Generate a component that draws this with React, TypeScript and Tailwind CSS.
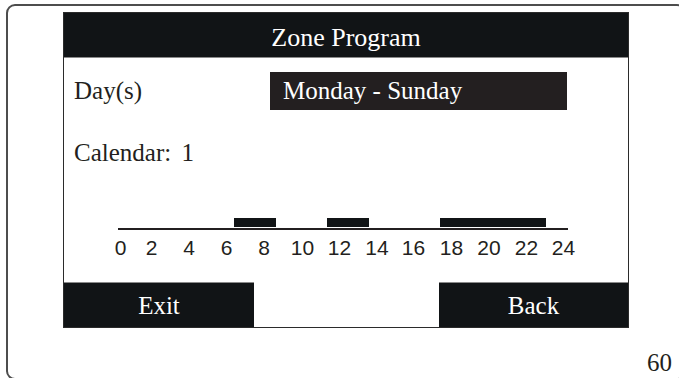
import React from 'react';

const serif = { fontFamily: '"Liberation Serif", "Times New Roman", serif' };

// hour labels and their centre x (svg coords)
const ticks: [string, number][] = [
  ['0', 56.5], ['2', 87.5], ['4', 125], ['6', 162.5], ['8', 200], ['10', 238.5], ['12', 275.5],
  ['14', 313], ['16', 349.5], ['18', 387.5], ['20', 425], ['22', 462.5], ['24', 499.5],
];

// active periods, in svg x
const periods = [
  { x: 170, w: 42 },
  { x: 263, w: 42 },
  { x: 376, w: 106 },
];

function Timeline() {
  return (
    <svg width="563" height="52" viewBox="0 0 563 52" className="block">
      {periods.map((p, i) => (
        <rect key={i} x={p.x} y={8} width={p.w} height={9} fill="#111416" />
      ))}
      <rect x={54} y={18} width={450} height={2} fill="#231f20" />
      {ticks.map(([t, x]) => (
        <text
          key={t}
          x={x}
          y={45}
          textAnchor="middle"
          fontSize="21"
          fill="#231f20"
          fontFamily='"Liberation Sans", Arial, sans-serif'
        >
          {t}
        </text>
      ))}
    </svg>
  );
}

export default function App() {
  return (
    <div className="w-[679px] h-[378px] overflow-hidden bg-white pt-[4px] pl-[6px]" style={serif}>
      <div className="w-[680px] h-[376px] border-2 border-[#4d4d4d] rounded-[9px] flex flex-col">
        {/* LCD screen */}
        <div className="w-[566px] ml-[55px] mt-[6px] border border-[#2b2b2b] flex flex-col bg-white">
          <div className="h-[45px] bg-[#111416] text-white text-[26px] leading-[45px] text-center pt-[2px] border-b border-[#8a8a8a]">
            Zone Program
          </div>

          <div className="h-[224px] flex flex-col text-[#231f20] text-[25px]">
            <div className="flex items-center mt-[14px]">
              <div className="w-[206px] pl-[10px] leading-[38px]">Day(s)</div>
              <div className="w-[297px] h-[38px] bg-[#231f20] text-white pl-[13px] leading-[38px]">
                Monday - Sunday
              </div>
            </div>
            <div className="pl-[10px] mt-[29px] leading-[28px] [word-spacing:4px]">Calendar: 1</div>
            <div className="mt-[43px]">
              <Timeline />
            </div>
          </div>

          <div className="flex h-[45px] text-[25px] leading-[45px] text-white">
            <div className="w-[190px] bg-[#111416] text-center border-t border-[#8a8a8a]">Exit</div>
            <div className="flex-1" />
            <div className="w-[189px] bg-[#111416] text-center border-t border-[#8a8a8a]">Back</div>
          </div>
        </div>

        <div className="flex justify-end pr-[12px] mt-[21px] text-[25px] leading-[28px] text-[#231f20]">60</div>
      </div>
    </div>
  );
}
